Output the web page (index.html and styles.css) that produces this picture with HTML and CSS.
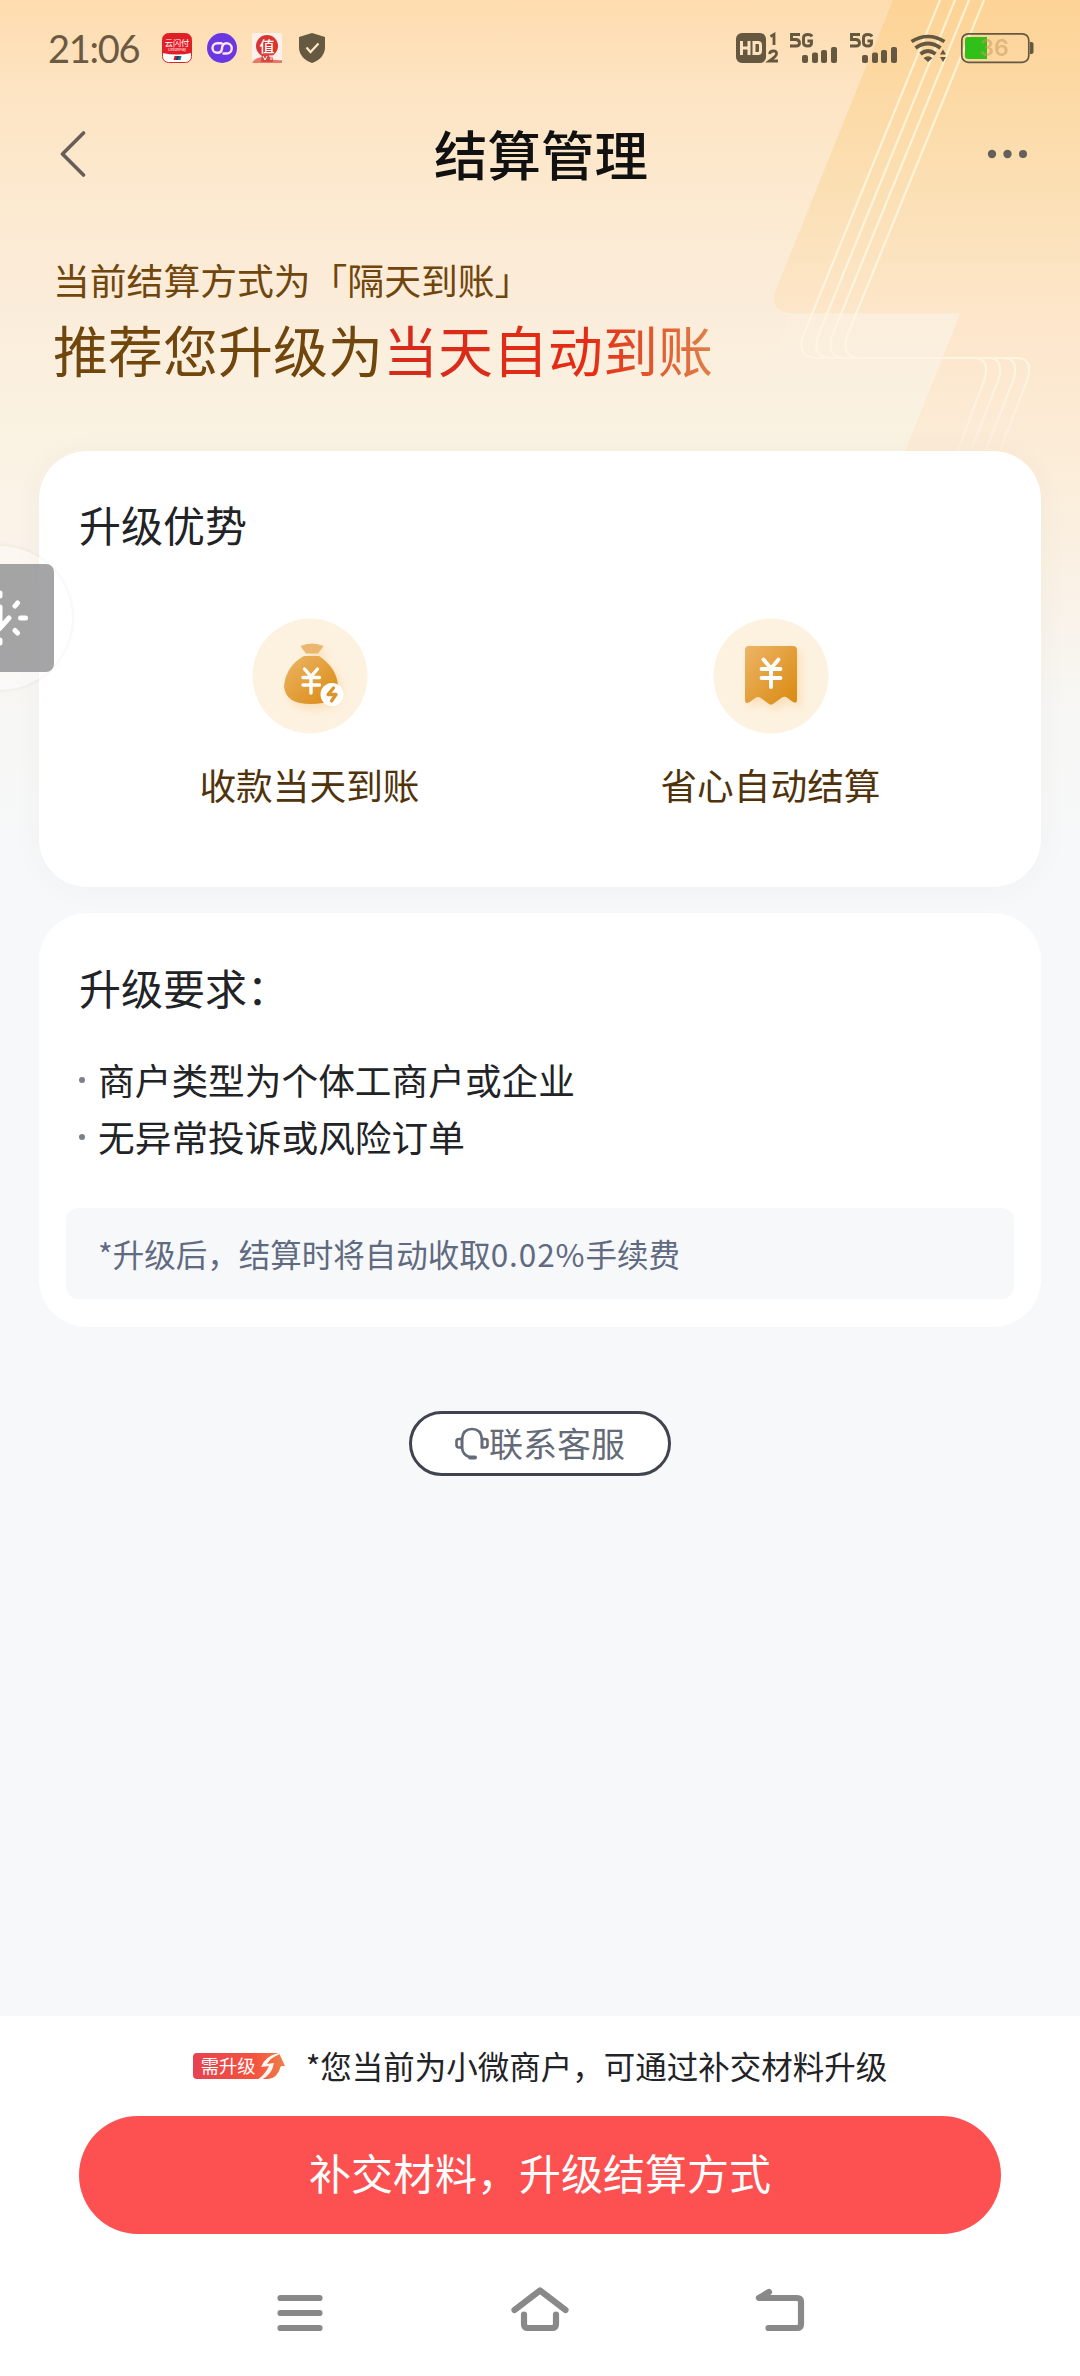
FILE: index.html
```html
<!DOCTYPE html>
<html lang="zh-CN">
<head>
<meta charset="utf-8">
<title>结算管理</title>
<link rel="stylesheet" href="styles.css">
</head>
<body>
<div class="screen">
  <svg class="backdrop" width="1080" height="900" viewBox="0 0 1080 900" fill="none" aria-hidden="true">
    <defs>
      <linearGradient id="ribbon" x1="0" y1="0" x2="0" y2="1">
        <stop offset="0" stop-color="#fdd396"/>
        <stop offset=".28" stop-color="#fbe0b5"/>
        <stop offset=".46" stop-color="#fde6cb"/>
        <stop offset=".7" stop-color="#fbeedb"/>
        <stop offset="1" stop-color="#f8f2ea" stop-opacity="0"/>
      </linearGradient>
      <linearGradient id="fold" x1="0" y1="0" x2="0" y2="1">
        <stop offset="0" stop-color="#fbeedd"/>
        <stop offset="1" stop-color="#faf2e2" stop-opacity="0"/>
      </linearGradient>
      <linearGradient id="wire" gradientUnits="userSpaceOnUse" x1="0" y1="0" x2="0" y2="450">
        <stop offset="0" stop-color="#fff1ce"/>
        <stop offset=".8" stop-color="#fff5e2"/>
        <stop offset="1" stop-color="#fdf1e2" stop-opacity=".6"/>
      </linearGradient>
    </defs>
    <path d="M893 0H1080V700H806L960 313H790Q770 311 775 292Z" fill="url(#ribbon)"/>
    <path d="M790 314H960L906 450H740Z" fill="url(#fold)"/>
    <g stroke="url(#wire)" stroke-width="2.2">
      <path d="M940 0L803 336Q796 358 818 358H975Q991 359 984 381L958 450"/>
      <path d="M955 0L818 336Q811 358 833 358H989Q1005 359 998 381L971 450"/>
      <path d="M969 0L832 336Q825 358 847 358H1004Q1020 359 1013 381L986 450"/>
      <path d="M984 0L847 336Q840 358 862 358H1018Q1034 359 1027 381L1000 450"/>
    </g>
  </svg>

  <div class="statusbar">
    <span class="clock">21:06</span>
    <svg class="app-icon" width="30" height="30" viewBox="0 0 30 30">
      <rect x=".5" y=".5" width="29" height="29" rx="6" fill="#fff" stroke="#d8242b"/>
      <path d="M.5 20V7Q.5.5 7 .5H23Q29.500 .5 29.500 7V20Q15 23 .5 20Z" fill="#e21e26"/>
      <text x="15" y="13" font-size="8.200" text-anchor="middle" fill="#fff">云闪付</text>
      <text x="15" y="18" font-size="4" text-anchor="middle" fill="#fff">UnionPay</text>
      <path d="M12.500 23H16l-1 4h-3.500Z" fill="#c51f30"/><path d="M15 23h2.500l-1 4H14Z" fill="#183c78"/><path d="M17 23h2.500l-1 4H16Z" fill="#087c82"/>
    </svg>
    <svg class="app-icon" width="30" height="30" viewBox="0 0 30 30" fill="none">
      <circle cx="15" cy="15" r="15" fill="#6938e2"/>
      <path d="M14.500 10.200H10.300A4.800 4.800 0 0 0 10.300 19.800Q14.500 20 15 15.500Q15.300 10.200 19.500 10.200A4.900 4.900 0 0 1 19.700 20.500H16.500" stroke="#ffe3e8" stroke-width="2.400" stroke-linecap="round"/>
    </svg>
    <svg class="app-icon" width="30" height="30" viewBox="0 0 30 30">
      <rect width="30" height="30" rx="2" fill="#fdf0ea"/>
      <path d="M0 30Q5 22 15 25T30 27V30Z" fill="#e57868"/>
      <circle cx="15" cy="13" r="11" fill="#d93430"/><path d="M10 21H20L21 29H9Z" fill="#d8463e"/>
      <text x="15" y="18.500" font-size="15" font-weight="500" text-anchor="middle" fill="#fff">值</text>
      <path d="M11 23l2 4 2-4M17 23h4M19 23v4" stroke="#fff" stroke-width="1" fill="none"/>
    </svg>
    <svg class="shield" width="26" height="30" viewBox="0 0 26 30" fill="none">
      <path d="M13 0L26 4V14Q26 25 13 30Q0 25 0 14V4Z" fill="#655941"/>
      <path d="M7.500 14.500L11.500 19L19.500 10.500" stroke="#ffe7c5" stroke-width="2.200"/>
    </svg>
    <svg class="status-right" width="300" height="34" viewBox="733 31 300 34" fill="#655740">
      <rect x="735" y="33" width="30" height="30" rx="6"/>
      <path d="M740.500 41v14M748 41v14M740.500 48H748M753 42.500h4q2.500 0 2.500 2.500v6q0 2.500-2.500 2.500h-4Z" fill="none" stroke="#fce2bd" stroke-width="3"/>
      <path d="M769.500 36.500L773 34.500V45M768.500 54Q769 51 772.500 51T775.500 54Q775.500 56 768.500 61H777" fill="none" stroke="#655740" stroke-width="2.800"/>
      <g id="cell">
        <path d="M799 34.500H790.500V39.500H795Q798.500 40 798.500 43T795 46H789M811 36.500Q810 34.500 807 34.500Q802.500 34.500 802.500 38V42.500Q802.500 46 807 46Q810.500 46 810.500 43V41H806.500" fill="none" stroke="#655740" stroke-width="2.900"/>
        <rect x="801" y="55" width="6" height="8" rx="2"/><rect x="811" y="52.500" width="6" height="10.500" rx="2"/><rect x="820" y="50" width="6" height="13" rx="2"/><rect x="830" y="47" width="6" height="16" rx="2"/>
      </g>
      <use href="#cell" x="60"/>
      <g fill="none" stroke="#655740" stroke-width="3.700"><path d="M910.500 41.500Q927 31.500 943.500 41.500"/><path d="M914.500 48Q927 39 939.500 48"/><path d="M919.500 54Q927 48 934.500 54"/></g>
      <path d="M927 62l-4.500-4Q927 54.500 931.500 58ZM942 49.500l3 5h-6ZM942 62l3-5h-6Z"/>
      <rect x="960.800" y="33.800" width="67" height="28.500" rx="6.500" fill="none" stroke="#655740" stroke-width="1.700"/>
      <path d="M1029 42h1.500q2 0 2 2v8q0 2-2 2H1029Z"/>
      <path d="M967 37H986V59H967Q964 59 964 56V40Q964 37 967 37Z" fill="#30c019"/>
      <text x="993" y="56" font-size="23" font-weight="600" text-anchor="middle" fill="#c89a5c" fill-opacity=".55" class="battery-text">36</text>
    </svg>
  </div>

  <div class="titlebar">
    <svg class="back" width="26" height="46" viewBox="0 0 26 46" fill="none"><path d="M23.500 2L2.500 23L23.500 44" stroke="#675f57" stroke-width="3.600" stroke-linecap="round" stroke-linejoin="round"/></svg>
    <h1 class="title">结算管理</h1>
    <svg class="more" width="40" height="10" viewBox="0 0 40 10" fill="#675f5b"><circle cx="5" cy="5" r="4.200"/><circle cx="20.500" cy="5" r="4.200"/><circle cx="36" cy="5" r="4"/></svg>
  </div>

  <div class="hero">
    <p class="hero-current">当前结算方式为「隔天到账」</p>
    <p class="hero-recommend">推荐您升级为<span class="hot">当天自动到账</span></p>
  </div>

  <section class="card benefits">
    <h2 class="card-title">升级优势</h2>
    <div class="benefit-grid">
      <div class="benefit">
        <svg width="116" height="116" viewBox="0 0 116 116" fill="none">
          <defs><linearGradient id="gold" x1="0" y1="0" x2="1" y2="1"><stop stop-color="#edb566"/><stop offset="1" stop-color="#d98910"/></linearGradient>
          <filter id="glow" x="-50%" y="-50%" width="200%" height="200%"><feDropShadow dx="4" dy="5" stdDeviation="5" flood-color="#f6bd72" flood-opacity=".35"/></filter></defs>
          <circle cx="58" cy="58" r="57.500" fill="#fdf2e0"/>
          <g filter="url(#glow)">
            <path d="M48.500 28Q60 23 71.500 28Q71 29 66 35.500H54Q49 29 48.500 28Z" fill="#ebb66e"/>
            <path d="M52 38H67Q85 50 86 68Q85 86 59 86Q33 86 32 68Q34 48 52 38Z" fill="url(#gold)"/>
          </g>
          <path d="M52.500 51L59 58.500L65.500 51M51 59.500H67.500M51 67H67.500M59 59V75" stroke="#fff" stroke-width="3.400" stroke-linecap="round"/>
          <circle cx="80" cy="76.500" r="11.500" fill="#fff"/>
          <path d="M81.500 70L76 76.500H84L79.500 83" stroke="#db942e" stroke-width="3.300" stroke-linejoin="round" stroke-linecap="round"/>
        </svg>
        <span class="benefit-label">收款当天到账</span>
      </div>
      <div class="benefit">
        <svg width="116" height="116" viewBox="0 0 116 116" fill="none">
          <circle cx="58" cy="58" r="57.500" fill="#fdf2e0"/>
          <path filter="url(#glow)" d="M36 28H80Q84 28 84 32V82Q84 86 80 84L73 79Q71 78.500 69 79.500L60 86Q58 87.500 56 86L47 79.500Q45 78.500 43 79.500L36 84.500Q32 86 32 82V32Q32 28 36 28Z" fill="url(#gold)"/>
          <path d="M50.500 41.500L58 50.500L65.500 41.500M48.500 51H67.500M48.500 60H67.500M58 51V69" stroke="#fff" stroke-width="3.800" stroke-linecap="round"/>
        </svg>
        <span class="benefit-label">省心自动结算</span>
      </div>
    </div>
  </section>

  <section class="card requirements">
    <h2 class="card-title">升级要求：</h2>
    <ul class="req-list">
      <li>商户类型为个体工商户或企业</li>
      <li>无异常投诉或风险订单</li>
    </ul>
    <p class="note">*升级后，结算时将自动收取<span class="rate">0.02%</span>手续费</p>
  </section>

  <button class="contact">
    <svg width="34" height="34" viewBox="0 0 34 34" fill="none" stroke="#646a78" stroke-width="2.600"><path d="M7 21V12Q8 2 17 2T27 12V21M7 21Q8 28 14.500 30"/><path d="M7 12H4Q1.500 12 1.500 14V18Q1.500 20.500 4 20.500H7Z"/><path d="M27 12H30Q32.500 12 32.500 14V18Q32.500 20.500 30 20.500H27Z"/><path d="M15 30.500H20" stroke-width="4" stroke-linecap="round"/></svg><span class="contact-label">联系客服</span>
  </button>

  <footer class="footer">
    <div class="hint">
      <span class="badge"><span class="badge-text">需升级</span>
        <svg class="badge-art" width="92" height="28" viewBox="0 0 92 28">
          <defs><linearGradient id="tag" x1="0" y1="0" x2="1" y2="0"><stop stop-color="#e64352"/><stop offset=".65" stop-color="#f4513f"/><stop offset="1" stop-color="#ee7e49"/></linearGradient></defs>
          <path d="M4 1H86L92 14H88Q84 27 75 27H4Q0 27 0 23V5Q0 1 4 1Z" fill="url(#tag)"/>
          <path d="M87 .5Q72 4 68 15L76 14Q72 23 64 28H68Q79 23 81 11L74 12Q77 6 87 2Z" fill="#fff7ef"/>
        </svg>
      </span>
      <span class="hint-text">*您当前为小微商户，可通过补交材料升级</span>
    </div>
    <button class="primary">补交材料，升级结算方式</button>
    <nav class="navbar">
      <svg width="60" height="48" viewBox="0 0 60 48"><path d="M10.500 11H49.500M10.500 26H49.500M10.500 41H49.500"/></svg>
      <svg width="60" height="48" viewBox="0 0 60 48"><path d="M4.500 23L30 3.500L55.500 23M14 27.500V37Q14 41 18 41H42Q46 41 46 37V27.500"/></svg>
      <svg width="60" height="48" viewBox="0 0 60 48"><path d="M19 5L9 11H47Q51 11 51 15V37Q51 41 47 41H18.500"/></svg>
    </nav>
  </footer>

  <div class="floater">
    <div class="floater-tab">
      <svg width="32" height="64" viewBox="0 0 32 64" fill="none" stroke="#fff" stroke-width="5" stroke-linecap="round"><path d="M0 7V10M0 54V57M15 20L17.500 17M20.500 32H25.500M15 44.500L17.500 47M-5 39L0 42L9 32M0 21V41"/></svg>
    </div>
  </div>
</div>
</body>
</html>
```
FILE: styles.css
```css
* { box-sizing: border-box; margin: 0; padding: 0; }

body {
  width: 1080px;
  font-family: "Noto Sans CJK SC", sans-serif;
  color: #222326;
}

button { font: inherit; border: 0; }

.screen {
  position: relative;
  display: flex;
  flex-direction: column;
  width: 1080px;
  height: 2376px;
  overflow: hidden;
  background: #f7f8fa linear-gradient(180deg, #fedcae 0, #fde4c3 90px, #fcead1 210px, #fbecda 300px, #faf2e1 420px, #faf3ea 560px, #f7f7f5 720px, #f7f8fa 880px) no-repeat;
}

.backdrop { position: absolute; left: 0; top: 0; }

.statusbar {
  position: relative;
  display: flex;
  align-items: center;
  height: 96px;
  padding: 0 46px 0 48px;
}

.clock {
  width: 114px;
  font: 400 38px/44px Lato, sans-serif;
  letter-spacing: -1.300px;
  color: #6b5a41;
}

.app-icon { margin-right: 15px; }
.shield { margin-left: 2px; }
.status-right { margin-left: auto; }
.battery-text { font-family: Inter, sans-serif; }

.titlebar {
  position: relative;
  display: flex;
  align-items: center;
  justify-content: space-between;
  height: 116px;
  padding: 0 53px 0 60px;
}

.title {
  flex: 1;
  text-align: center;
  padding: 0 0 2px 9px;
  font-size: 53.500px;
  font-weight: 500;
  line-height: 80px;
  color: #111;
}

.hero {
  position: relative;
  height: 239px;
  padding: 39px 53px 0;
}

.hero-current { font-size: 36.800px; line-height: 56px; color: #70460d; }

.hero-recommend {
  margin-top: 1px;
  font-size: 55px;
  line-height: 80px;
  color: #70460d;
}

.hot {
  background: linear-gradient(90deg, #d52a1c 0, #e52b13 62%, #df8148 100%);
  -webkit-background-clip: text;
  background-clip: text;
  color: transparent;
}

.card {
  position: relative;
  margin: 0 39px;
  border-radius: 48px;
  background: #fff;
}

.card-title {
  padding-left: 40px;
  font-size: 42px;
  font-weight: 400;
  line-height: 60px;
}

.benefits {
  height: 436px;
  padding-top: 43px;
  box-shadow: 0 2px 30px rgba(70, 65, 55, .04);
}

.benefit-grid {
  display: grid;
  grid-template-columns: 1fr 1fr;
  padding: 64px 40px 0;
}

.benefit {
  display: flex;
  flex-direction: column;
  align-items: center;
  gap: 22px;
}

.benefit-label { font-size: 36.700px; line-height: 56px; color: #51330b; }

.requirements {
  height: 414px;
  margin-top: 26px;
  padding-top: 44px;
}

.req-list { padding: 34px 40px 0; list-style: none; }

.req-list li {
  display: flex;
  align-items: center;
  gap: 13px;
  font-size: 36.700px;
  line-height: 57px;
}

.req-list li::before {
  content: "";
  width: 6px;
  height: 6px;
  border-radius: 50%;
  background: #7c8088;
}

.note {
  height: 91px;
  margin: 43px 27px 0;
  padding-left: 32px;
  border-radius: 12px;
  background: #f7f8fa;
  font-size: 31.500px;
  line-height: 90px;
  color: #606a80;
}

.rate { letter-spacing: .900px; }

.contact {
  display: flex;
  align-items: center;
  justify-content: center;
  align-self: center;
  width: 262px;
  height: 65px;
  margin-top: 84px;
  border: 3px solid #40444f;
  border-radius: 33px;
  background: #fff;
  font-size: 34px;
  color: #646a78;
}

.contact-label { line-height: 48px; padding-bottom: 2px; }

.footer {
  position: relative;
  height: 360px;
  margin-top: auto;
  background: #fff;
}

.hint {
  display: flex;
  align-items: center;
  justify-content: center;
  gap: 21px;
  height: 100px;
}

.badge { position: relative; width: 92px; height: 28px; }
.badge-art { display: block; }

.badge-text {
  position: absolute;
  left: 8px;
  top: 0;
  font-size: 18.300px;
  line-height: 27px;
  color: #fff;
}

.hint-text { font-size: 31.500px; line-height: 44px; padding-bottom: 3px; }

.primary {
  display: block;
  width: 922px;
  height: 118px;
  margin: 0 auto;
  padding-bottom: 7px;
  border-radius: 59px;
  background: #fd5050;
  font-size: 42px;
  color: #fff;
}

.navbar {
  display: flex;
  justify-content: center;
  gap: 180px;
  padding-top: 53px;
}

.navbar svg {
  fill: none;
  stroke: #898989;
  stroke-width: 6.200;
  stroke-linecap: round;
  stroke-linejoin: round;
}

/* assistive handle docked on the left edge */
.floater {
  position: absolute;
  left: -72px;
  top: 546px;
  width: 144px;
  height: 144px;
  border-radius: 50%;
  background: rgba(255, 255, 255, .35);
  box-shadow: 0 0 4px rgba(0, 0, 0, .08);
}

.floater-tab {
  display: flex;
  align-items: center;
  width: 54px;
  height: 108px;
  margin: 18px 0 0 72px;
  border-radius: 0 8px 8px 0;
  background: rgba(145, 145, 148, .82);
}
```
